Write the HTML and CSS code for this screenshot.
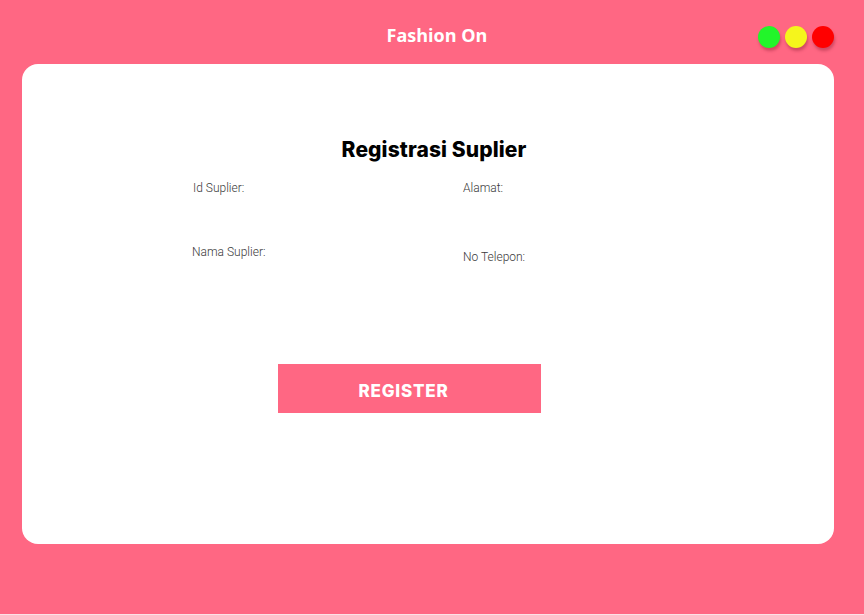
FILE: index.html
```html
<!DOCTYPE html>
<html>
<head>
<meta charset="utf-8">
<link rel="stylesheet" href="styles.css">
</head>
<body>
<div class="frame">
  <header class="topbar">
    <div class="spacer"></div>
    <div class="app-title">Fashion On</div>
    <div class="lights">
      <span class="light green"></span>
      <span class="light yellow"></span>
      <span class="light red"></span>
    </div>
  </header>
  <main class="card">
    <h1 class="heading">Registrasi Suplier</h1>
    <div class="form-grid">
      <div class="field f-id">Id Suplier:</div>
      <div class="field f-alamat">Alamat:</div>
      <div class="field f-nama">Nama Suplier:</div>
      <div class="field f-telp">No Telepon:</div>
    </div>
    <div class="actions">
      <button class="register">REGISTER</button>
    </div>
  </main>
</div>
</body>
</html>
```

FILE: styles.css
```css
html, body {
  margin: 0;
  padding: 0;
}
body {
  background: #fde0e6;
  width: 864px;
  height: 615px;
  overflow: hidden;
}
.frame {
  background: #ff6783;
  height: 614px;
  display: flex;
  flex-direction: column;
}
.topbar {
  height: 64px;
  display: grid;
  grid-template-columns: 1fr auto 1fr;
  align-items: center;
}
.app-title {
  font-family: "Open Sans", sans-serif;
  font-weight: 700;
  font-size: 18px;
  color: #ffffff;
  padding-left: 10px;
  margin-top: 6px;
}
.lights {
  display: flex;
  justify-content: flex-end;
  gap: 5px;
  padding-right: 30px;
  margin-top: 10px;
}
.light {
  width: 22px;
  height: 22px;
  border-radius: 50%;
  box-shadow: 1px 3px 3px rgba(120, 20, 40, 0.35);
}
.green { background: #22f52a; }
.yellow { background: #f5f51c; }
.red { background: #ff0000; }

.card {
  background: #ffffff;
  margin: 0 30px 0 22px;
  height: 480px;
  border-radius: 16px;
  box-sizing: border-box;
  padding-top: 73px;
}
.heading {
  margin: 0;
  text-align: center;
  font-family: "Inter", "Roboto", sans-serif;
  font-weight: 800;
  font-size: 21px;
  letter-spacing: 0.1px;
  color: #000;
  padding-left: 12px;
  line-height: 26px;
}
.form-grid {
  display: grid;
  grid-template-columns: 271px 271px;
  grid-template-rows: 64px 40px;
  padding-left: 170px;
  margin-top: 17px;
  font-family: "Roboto", "Inter", sans-serif;
  font-weight: 300;
  font-size: 12px;
  color: #3a3a3a;
  line-height: 16px;
}
.f-id { padding-left: 1px; }
.f-telp { padding-top: 5px; }
.actions {
  padding-left: 256px;
  margin-top: 80px;
}
.register {
  width: 263px;
  height: 49px;
  border: none;
  background: #ff6783;
  color: #ffffff;
  font-family: "Inter", "Roboto", sans-serif;
  font-weight: 800;
  font-size: 17px;
  letter-spacing: 0.8px;
  padding: 4px 12px 0 0;
  cursor: pointer;
}
```
